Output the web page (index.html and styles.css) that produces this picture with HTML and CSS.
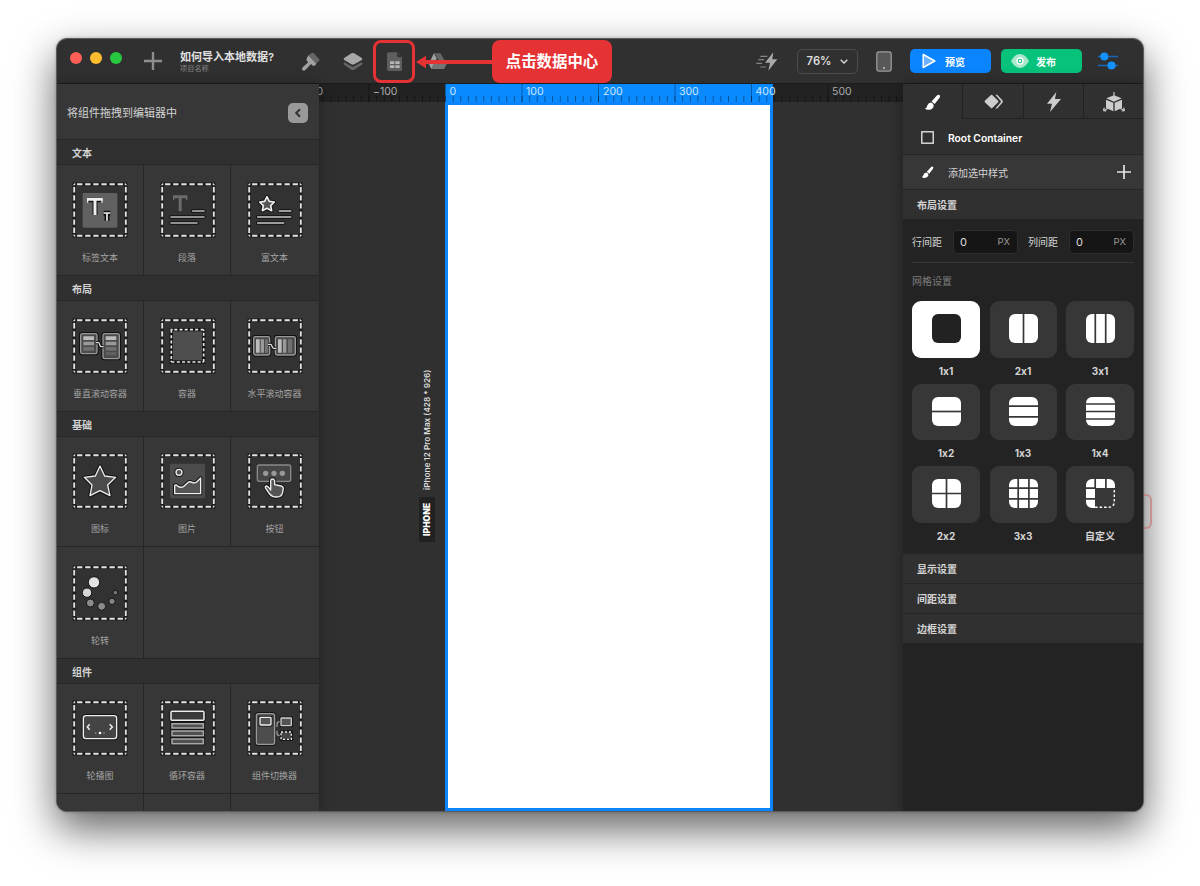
FILE: index.html
```html
<!DOCTYPE html>
<html lang="zh-CN">
<head>
<meta charset="utf-8">
<title>如何导入本地数据?</title>
<link rel="stylesheet" href="styles.css">
</head>
<body>
<svg class="defs" width="0" height="0" aria-hidden="true">
  <symbol id="box" viewBox="0 0 168 168">
    <rect x="6.6" y="6.6" width="154.8" height="154.8" fill="#323232" stroke="#1c1c1c" stroke-width="10"/>
    <rect x="6.6" y="6.6" width="154.8" height="154.8" fill="none" stroke="#e2e2e2" stroke-width="5.6" stroke-dasharray="3 5.7 15.9 8.4 15.9 8.4 15.9 8.4 15.9 8.4 15.9 8.4 15.9 5.7 3 0"/>
  </symbol>
  <symbol id="brush" viewBox="0 0 54 54">
    <path d="M49 3q4 3 1 8L34 32l-10-8L41 5q4-4 8-2z"/>
    <path d="M22 27q9 3 9 11-3 11-15 12Q7 51 3 45q6 0 7-8 3-9 12-10z"/>
  </symbol>
</svg>
<div class="window">
  <header class="topbar">
    <div class="lights"><i class="red"></i><i class="yellow"></i><i class="green"></i></div>
    <svg class="plus" viewBox="0 0 18 18"><path d="M9 0v18M0 9h18" stroke="#8e8e8e" stroke-width="2.4"/></svg>
    <div class="title"><b>如何导入本地数据?</b><span>项目名称</span></div>
    <nav class="tools">
      <svg viewBox="24 57 72 72"><path d="M56 76l9-7q3-2 6 0l16 18q3 3 0 6l-10 10z" fill="#666"/><path d="M55 76l24 26-4 4q-4 4-8 0l-4-4-17 18q-4 4-8 1t0-9l17-15-4-4q-4-5 0-9z" fill="#a2a2a2"/></svg>
      <svg viewBox="151.5 57 72 72"><path d="M161 97l26 14 26-14 3 3q0 3-3 5l-22 14q-4 2-8 0l-21-14q-3-2-3-5z" fill="#666"/><path d="M161 84l22-14q4-2 8 0l23 14q3 3 0 6l-23 13q-4 2-8 0l-22-13q-3-3 0-6z" fill="#a8a8a8"/></svg>
      <span class="picked"><svg viewBox="279 57 72 72"><path d="M296 67h26l14 14v38q0 4-4 4h-36q-5 0-5-5V72q0-5 5-5z" fill="#5e5e5e"/><path d="M321 67l15 15h-11q-4 0-4-4z" fill="#333"/><path d="M300 94h13v8h-13zM316 94h13v8h-13zM300 106h13v8h-13zM316 106h13v8h-13z" fill="#b4b4b4"/></svg></span>
      <svg viewBox="406.5 57 72 72"><path d="M430 70h20l18 31h-18l-14-25z" fill="#666"/><path d="M430 70l9 15-16 32-8-15z" fill="#a0a0a0"/><path d="M430 102h38l-7 15h-38z" fill="#747474"/></svg>
    </nav>
    <div class="actions">
      <svg class="i24" viewBox="45 57 72 72"><path d="M100 67L75 98h15l-5 24 27-34H97z" fill="#a8a8a8"/><path d="M61 79h21M55 89h17M49 100h17M61 111h17" stroke="#858585" stroke-width="3.5"/></svg>
      <div class="zoom">76%<svg viewBox="0 0 8 5"><path d="M.7.7L4 4 7.3.7" fill="none" stroke="#ddd" stroke-width="1.3"/></svg></div>
      <svg class="tablet" viewBox="0 0 16 21"><rect x=".8" y=".8" width="14.4" height="19.4" rx="2.4" fill="#585858" stroke="#9b9b9b" stroke-width="1.3"/><circle cx="8" cy="17" r="1" fill="#ccc"/></svg>
      <div class="btn blue"><svg viewBox="0 0 14 16"><path d="M1.2 1.5v13L12.8 8z" fill="#6cb3ff" stroke="#fff" stroke-width="1.5" stroke-linejoin="round"/></svg>预览</div>
      <div class="btn grn"><svg viewBox="0 0 18 14"><path d="M0 7Q4 0 9 0t9 7q-4 7-9 7T0 7z" fill="#a9e6cc"/><circle cx="9" cy="7" r="3" fill="#0abf78" stroke="#fff" stroke-width="1.4"/><circle cx="9" cy="7" r="1.3" fill="#fff"/></svg>发布</div>
      <svg class="sliders" viewBox="0 0 20 18"><path d="M0 4.5h20M0 13.5h20" stroke="#1768b6" stroke-width="1.4"/><circle cx="6.3" cy="4.5" r="4" fill="#1391ff"/><circle cx="13.5" cy="13.5" r="4" fill="#1391ff"/></svg>
    </div>
  </header>
  <main class="work">
    <aside class="left">
      <div class="hint">将组件拖拽到编辑器中<span class="fold"><svg viewBox="0 0 8 10"><path d="M6 1.2L2.2 5 6 8.8" fill="none" stroke="#333" stroke-width="2"/></svg></span></div>
      <h3>文本</h3>
      <div class="row">
        <div class="cell"><svg viewBox="66 126 168 168"><use href="#box" x="66" y="126" width="168" height="168"/><rect x="98" y="159" width="104" height="104" rx="4" fill="#616161"/><path d="M112 179h45M135 178v47M161 220h20M171 219v23" stroke="#111" stroke-width="15"/><path d="M111 178h47M135 178v47" stroke="#eee" stroke-width="9"/><path d="M113 176v12M156 176v12" stroke="#eee" stroke-width="4"/><path d="M161 219h20M171 219v23" stroke="#eee" stroke-width="5"/></svg><span>标签文本</span></div>
        <div class="cell"><svg viewBox="330 126 168 168"><use href="#box" x="330" y="126" width="168" height="168"/><path d="M369 170h43M390.500 170v44" stroke="#6b6b6b" stroke-width="9"/><path d="M371 169v11M410 169v11" stroke="#6b6b6b" stroke-width="4"/><path d="M428 213h34M363 231h99M363 249h78" stroke="#111" stroke-width="11" stroke-linecap="round"/><path d="M428 213h34M363 231h99M363 249h78" stroke="#bbb" stroke-width="5" stroke-linecap="round"/></svg><span>段落</span></div>
        <div class="cell"><svg viewBox="591 126 168 168"><use href="#box" x="591" y="126" width="168" height="168"/><path d="M651 170l7 14 15 2-11 11 3 15-14-7-14 7 3-15-11-11 15-2z" fill="#555" stroke="#111" stroke-width="11" stroke-linejoin="round"/><path d="M651 170l7 14 15 2-11 11 3 15-14-7-14 7 3-15-11-11 15-2z" fill="#555" stroke="#eee" stroke-width="5" stroke-linejoin="round"/><path d="M688 213h34M623 231h99M623 249h78" stroke="#111" stroke-width="11" stroke-linecap="round"/><path d="M688 213h34M623 231h99M623 249h78" stroke="#ccc" stroke-width="5" stroke-linecap="round"/></svg><span>富文本</span></div>
      </div>
      <h3>布局</h3>
      <div class="row">
        <div class="cell"><svg viewBox="66 84 168 168"><use href="#box" x="66" y="84" width="168" height="168"/><g fill="#4b4b4b"><rect x="92" y="131" width="49" height="60" rx="5" stroke="#111" stroke-width="10"/><rect x="159" y="131" width="49" height="75" rx="5" stroke="#111" stroke-width="10"/><rect x="92" y="131" width="49" height="60" rx="5" stroke="#999" stroke-width="4"/><rect x="159" y="131" width="49" height="75" rx="5" stroke="#999" stroke-width="4"/></g><path d="M100 139h32v11h-32zM167 139h32v11h-32z" fill="#bbb"/><path d="M100 155h32v11h-32zM167 155h32v11h-32z" fill="#999"/><path d="M100 171h32v11h-32zM167 171h32v11h-32z" fill="#707070"/><path d="M167 186h32v10h-32z" fill="#606060"/><path d="M138 158h8q2 0 3 6t5 6h7" fill="none" stroke="#111" stroke-width="9"/><path d="M138 158h8q2 0 3 6t5 6h7" fill="none" stroke="#ddd" stroke-width="4"/></svg><span>垂直滚动容器</span></div>
        <div class="cell"><svg viewBox="330 84 168 168"><use href="#box" x="330" y="84" width="168" height="168"/><rect x="364" y="119" width="97" height="97" fill="#4e4e4e" stroke="#161616" stroke-width="10"/><rect x="364" y="119" width="97" height="97" fill="none" stroke="#e6e6e6" stroke-width="5" stroke-dasharray="4 5 9 6.600 9 6.600 9 6.600 9 6.600 9 7.600 9 0"/></svg><span>容器</span></div>
        <div class="cell"><svg viewBox="591 84 168 168"><use href="#box" x="591" y="84" width="168" height="168"/><g fill="#4b4b4b"><rect x="611" y="140" width="48" height="55" rx="5" stroke="#111" stroke-width="10"/><rect x="676" y="140" width="60" height="55" rx="5" stroke="#111" stroke-width="10"/><rect x="611" y="140" width="48" height="55" rx="5" stroke="#999" stroke-width="4"/><rect x="676" y="140" width="60" height="55" rx="5" stroke="#999" stroke-width="4"/></g><path d="M618 148h11v40h-11zM684 148h11v40h-11z" fill="#bbb"/><path d="M632 148h10v40h-10zM699 148h10v40h-10z" fill="#999"/><path d="M645 148h9v40h-9zM714 148h12v40h-12z" fill="#707070"/><path d="M654 163h8q2 0 4 6t5 6h8" fill="none" stroke="#111" stroke-width="9"/><path d="M654 163h8q2 0 4 6t5 6h8" fill="none" stroke="#ddd" stroke-width="4"/></svg><span>水平滚动容器</span></div>
      </div>
      <h3>基础</h3>
      <div class="row short">
        <div class="cell"><svg viewBox="66 39 168 168"><use href="#box" x="66" y="39" width="168" height="168"/><path d="M150 78l14 30 33 4-24 23 7 32-30-15-30 15 6-32-23-23 33-4z" fill="#4b4b4b" stroke="#111" stroke-width="10" stroke-linejoin="round"/><path d="M150 78l14 30 33 4-24 23 7 32-30-15-30 15 6-32-23-23 33-4z" fill="#4b4b4b" stroke="#eee" stroke-width="4" stroke-linejoin="round"/></svg><span>图标</span></div>
        <div class="cell"><svg viewBox="330 39 168 168"><use href="#box" x="330" y="39" width="168" height="168"/><rect x="360" y="71" width="105" height="104" rx="5" fill="#4c4c4c"/><g fill="#555" stroke-linejoin="round"><g stroke="#111" stroke-width="10"><circle cx="387" cy="97" r="9"/><path d="M374 161v-25q3-4 10 3 8 5 16 1l13-12q6-5 13-1t14-1l12-12v47z"/></g><g stroke="#eee" stroke-width="4"><circle cx="387" cy="97" r="9"/><path d="M374 161v-25q3-4 10 3 8 5 16 1l13-12q6-5 13-1t14-1l12-12v47z"/></g></g></svg><span>图片</span></div>
        <div class="cell"><svg viewBox="591 39 168 168"><use href="#box" x="591" y="39" width="168" height="168"/><rect x="622" y="75" width="100" height="49" rx="6" fill="#464646" stroke="#8a8a8a" stroke-width="4"/><g fill="#999"><circle cx="647" cy="100" r="8"/><circle cx="672" cy="100" r="8"/><circle cx="697" cy="100" r="8"/></g><path d="M662 150v-28q0-5 5-5t7 5v12l20 4q6 2 6 7l-2 12q-3 14-17 14-14 1-22-9l-10-14q-6-8-1-10 5-1 14 12z" fill="#555" stroke="#111" stroke-width="10" stroke-linejoin="round"/><path d="M662 150v-28q0-5 5-5t7 5v12l20 4q6 2 6 7l-2 12q-3 14-17 14-14 1-22-9l-10-14q-6-8-1-10 5-1 14 12z" fill="#555" stroke="#eee" stroke-width="4" stroke-linejoin="round"/></svg><span>按钮</span></div>
      </div>
      <div class="row second">
        <div class="cell"><svg viewBox="66 375 168 168"><use href="#box" x="66" y="375" width="168" height="168"/><g stroke="#151515" stroke-width="3"><circle cx="132" cy="427" r="17" fill="#e2e2e2"/><circle cx="111" cy="458" r="14" fill="#d6d6d6"/><circle cx="121" cy="489" r="12" fill="#8c8c8c"/><circle cx="155" cy="499" r="12" fill="#8c8c8c"/><circle cx="186" cy="484" r="9.500" fill="#858585"/><circle cx="196" cy="458" r="7" fill="#777"/></g></svg><span>轮转</span></div>
      </div>
      <h3>组件</h3>
      <div class="row short">
        <div class="cell"><svg viewBox="66 134 168 168"><use href="#box" x="66" y="134" width="168" height="168"/><rect x="100" y="181" width="100" height="69" rx="8" fill="#444" stroke="#111" stroke-width="10"/><rect x="100" y="181" width="100" height="69" rx="8" fill="#444" stroke="#eee" stroke-width="4"/><path d="M119 207l-7 8 7 8M179 207l8 8-8 8" fill="none" stroke="#eee" stroke-width="4.500"/><g fill="#999"><circle cx="137" cy="233" r="2.500"/><circle cx="150" cy="233" r="4" fill="#fff"/><circle cx="162" cy="233" r="2.500"/></g></svg><span>轮播图</span></div>
        <div class="cell"><svg viewBox="330 134 168 168"><use href="#box" x="330" y="134" width="168" height="168"/><g fill="#505050"><g stroke="#151515" stroke-width="10"><rect x="363" y="168" width="99" height="27" rx="3"/><path d="M366 205h94v13h-94zM366 227h94v14h-94zM366 251h94v14h-94z"/></g><rect x="363" y="168" width="99" height="27" rx="3" stroke="#eee" stroke-width="4.500" fill="#3a3a3a"/><path d="M366 205h94v13h-94zM366 227h94v14h-94zM366 251h94v14h-94z" stroke="#a8a8a8" stroke-width="4.500"/></g></svg><span>循环容器</span></div>
        <div class="cell"><svg viewBox="591 134 168 168"><use href="#box" x="591" y="134" width="168" height="168"/><rect x="619" y="175" width="55" height="92" rx="6" fill="#4d4d4d" stroke="#151515" stroke-width="10"/><rect x="619" y="175" width="55" height="92" rx="6" fill="#4d4d4d" stroke="#999" stroke-width="4"/><g stroke="#151515" stroke-width="9" fill="#555"><rect x="630" y="186" width="33" height="23"/><rect x="693" y="188" width="31" height="23"/><rect x="693" y="230" width="31" height="22"/></g><rect x="630" y="186" width="33" height="23" rx="2" fill="#555" stroke="#eee" stroke-width="4"/><rect x="693" y="188" width="31" height="23" rx="2" fill="#555" stroke="#ccc" stroke-width="4"/><rect x="693" y="230" width="31" height="22" fill="#444" stroke="#eee" stroke-width="4" stroke-dasharray="6 6"/><path d="M681 215v-8q0-8 8-8M681 226v7q0 8 8 8" stroke="#999" stroke-width="4" fill="none"/></svg><span>组件切换器</span></div>
      </div>
      <div class="row last"><div class="cell"><i></i></div><div class="cell"><i></i></div><div class="cell"><i></i></div></div>
    </aside>
    <section class="canvas">
      <svg class="ruler" viewBox="0 0 584 18">
        <defs>
          <pattern id="minor" x="126" width="7.650" height="18" patternUnits="userSpaceOnUse"><path d="M.5 12v6" stroke="#000" stroke-opacity=".48" stroke-width=".8"/></pattern>
          <pattern id="major" x="126" width="76.500" height="18" patternUnits="userSpaceOnUse"><path d="M.5 0v18" stroke="#000" stroke-opacity=".42" stroke-width=".8"/></pattern>
        </defs>
        <rect width="584" height="18" fill="#222"/>
        <rect x="126" width="328" height="18" fill="#0a8aff"/>
        <rect width="584" height="18" fill="url(#minor)"/>
        <rect width="584" height="18" fill="url(#major)"/>
        <g class="nums"><text x="-22">−200</text><text x="54">−100</text><text x="130.500" class="on">0</text><text x="207" class="on">100</text><text x="284" class="on">200</text><text x="360" class="on">300</text><text x="436.500" class="on">400</text><text x="513">500</text></g>
      </svg>
      <div class="artboard"></div>
      <div class="device"><b>IPHONE</b><span>iPhone 12 Pro Max (428 * 926)</span></div>
    </section>
    <aside class="right">
      <div class="tabs">
        <div class="active"><svg viewBox="0 0 54 54" fill="#fff"><use href="#brush"/></svg></div>
        <div><svg class="wide" viewBox="0 0 60 48"><path d="M22 3q2-2 4 0l18 18q3 3 0 6L26 45q-2 2-4 0L3 27q-3-3 0-6zM36 2h6l17 19q2 3 0 6L42 46h-6l17-20q2-2 0-4z" fill="#ccc"/></svg></div>
        <div><svg class="bolt" viewBox="0 0 42 60"><path d="M28 0L0 35h15L9 60l33-39H24z" fill="#ccc"/></svg></div>
        <div><svg class="cube" viewBox="0 0 66 60"><path d="M33 10l23 9-23 10-23-10zM9 23l22 9v26L9 48zM57 23l-22 9v26l22-10z" fill="#ccc"/><path d="M33 0v16M1 56l14-7M65 56l-14-7M1 56l3-9M1 56l9 1M65 56l-3-9M65 56l-9 1" stroke="#ccc" stroke-width="3.500"/></svg></div>
      </div>
      <div class="line root"><svg viewBox="0 0 13 13"><rect x=".8" y=".8" width="11.4" height="11.4" fill="none" stroke="#eee" stroke-width="1.3"/></svg><b>Root Container</b></div>
      <div class="line add"><svg viewBox="0 0 54 54" fill="#fff"><use href="#brush"/></svg><span>添加选中样式</span><svg class="more" viewBox="0 0 14 14"><path d="M7 0v14M0 7h14" stroke="#e4e4e4" stroke-width="1.7"/></svg></div>
      <h4 class="first">布局设置</h4>
      <div class="settings">
        <div class="gaps"><span>行间距</span><div class="field">0<em>PX</em></div><span>列间距</span><div class="field">0<em>PX</em></div></div>
        <div class="caption">网格设置</div>
        <div class="tiles">
          <figure class="sel"><div><svg viewBox="0 0 29 29"><rect width="29" height="29" rx="6" fill="#222"/></svg></div>1x1</figure>
          <figure><div><svg viewBox="0 0 29 29"><rect width="29" height="29" rx="6"/><path d="M14.500 0v29"/></svg></div>2x1</figure>
          <figure><div><svg viewBox="0 0 29 29"><rect width="29" height="29" rx="6"/><path d="M9.300 0v29M19.700 0v29"/></svg></div>3x1</figure>
          <figure><div><svg viewBox="0 0 29 29"><rect width="29" height="29" rx="6"/><path d="M0 14.500h29"/></svg></div>1x2</figure>
          <figure><div><svg viewBox="0 0 29 29"><rect width="29" height="29" rx="6"/><path d="M0 9.200h29M0 19.900h29"/></svg></div>1x3</figure>
          <figure><div><svg viewBox="0 0 29 29"><rect width="29" height="29" rx="6"/><path d="M0 7h29M0 14.500h29M0 22h29"/></svg></div>1x4</figure>
          <figure><div><svg viewBox="0 0 29 29"><rect width="29" height="29" rx="6"/><path d="M0 14.500h29M14.500 0v29"/></svg></div>2x2</figure>
          <figure><div><svg viewBox="0 0 29 29"><rect width="29" height="29" rx="6"/><path d="M0 9.200h29M0 19.900h29M9.200 0v29M19.900 0v29"/></svg></div>3x3</figure>
          <figure><div><svg viewBox="0 0 29 29"><path class="solid" d="M6 0h17a6 6 0 0 1 6 6v3H9v20H6a6 6 0 0 1-6-6V6a6 6 0 0 1 6-6z"/><path d="M9.200 0v9.200M19.900 0v9.200M0 9.200h9.200M0 19.900h9.200"/><path class="dots" d="M28.300 11v12a5.300 5.300 0 0 1-5.300 5.300H9"/></svg></div>自定义</figure>
        </div>
      </div>
      <h4>显示设置</h4>
      <h4>间距设置</h4>
      <h4>边框设置</h4>
    </aside>
  </main>
</div>
<div class="callout-frame"></div>
<svg class="callout-arrow" viewBox="0 0 78 14"><path d="M0 7L10 .8v4.300h68v3.800H10v4.300z" fill="#e53234"/></svg>
<div class="callout">点击数据中心</div>
<div class="stub"></div>
</body>
</html>
```

FILE: styles.css
```css
* { box-sizing: border-box; }
body {
  margin: 0;
  height: 886px;
  overflow: hidden;
  position: relative;
  background: #fff;
  padding: 38px 56px 0;
  font-family: Inter, "Noto Sans CJK SC", sans-serif;
  font-feature-settings: "calt" 0;
  color: #d4d4d4;
}
svg { display: block; flex: none; }
.defs { position: absolute; }
.window {
  position: relative;
  z-index: 1;
  width: 1088px;
  height: 774px;
  border: 1px solid #5c5c5c;
  border-radius: 11px;
  overflow: hidden;
  background: #303030;
  box-shadow: 0 17px 42px rgba(0, 0, 0, .62), 0 0 3px rgba(0, 0, 0, .25);
  display: flex;
  flex-direction: column;
}

/* top bar */
.topbar {
  height: 45px;
  border-bottom: 1px solid #1d1d1d;
  display: flex;
  align-items: center;
  padding-left: 13px;
}
.lights { display: flex; gap: 8px; margin-bottom: 6px; }
.lights i { width: 12px; height: 12px; border-radius: 50%; }
.red { background: #ff5f57; }
.yellow { background: #febc2e; }
.green { background: #28c840; }
.plus { width: 18px; height: 18px; margin-left: 22px; }
.title { width: 118px; margin-left: 18px; display: flex; flex-direction: column; white-space: nowrap; }
.title b { font-size: 11px; line-height: 14px; font-weight: 600; color: #e0e0e0; }
.title span { font-size: 7.200px; line-height: 9px; color: #858585; }
.tools { display: flex; gap: 18.500px; }
.tools svg, .i24 { width: 24px; height: 24px; }
.actions { display: flex; align-items: center; margin-left: auto; padding-right: 25px; }
.zoom {
  width: 61px; height: 25px; margin-left: 18px;
  border: 1px solid #4b4b4b; border-radius: 5px;
  display: flex; align-items: center; justify-content: center; gap: 9px;
  font-size: 11.300px; font-weight: 600; color: #ddd;
}
.zoom svg { width: 8px; height: 5px; }
.tablet { width: 16px; height: 21px; margin: 0 18px; }
.btn {
  width: 81px; height: 24px; border-radius: 5px; margin-right: 10px; padding-left: 12px;
  display: flex; align-items: center; gap: 9px;
  color: #fff; font-size: 10px; font-weight: 700;
}
.btn svg { width: 14px; height: 16px; }
.grn { margin-right: 16px; padding-left: 10px; gap: 7px; }
.btn.grn svg { width: 18px; height: 14px; }
.blue { background: #0a84ff; }
.grn { background: #07c27a; }
.sliders { width: 20px; height: 18px; }

.work { flex: 1; display: flex; min-height: 0; }

/* component panel */
.left { width: 262px; background: #373737; flex: none; overflow: hidden; box-shadow: 0 0 12px rgba(0, 0, 0, .35); z-index: 2; }
.hint { height: 55px; padding: 0 11px 0 10px; display: flex; align-items: center; justify-content: space-between; font-size: 11px; }
.fold { width: 20px; height: 20px; border-radius: 5px; background: #999; display: flex; align-items: center; justify-content: center; margin-top: 3px; }
.fold svg { width: 8px; height: 10px; }
.left h3 {
  margin: 0; height: 25px; border-top: 1px solid #262626; background: #303030;
  padding-left: 15px; font-size: 10px; line-height: 26px; font-weight: 700;
}
.row { height: 111px; border-top: 1px solid #262626; display: grid; grid-template-columns: 87px 87px 88px; }
.short { height: 110px; }
.second { height: 112px; }
.cell { border-right: 1px solid #262626; display: flex; flex-direction: column; align-items: center; padding-top: 17px; }
.cell:nth-child(3) { border-right-color: #333; }
.cell svg { width: 56px; height: 56px; }
.cell:nth-child(2) svg { margin-left: 1px; }
.short .cell { padding-top: 16px; }
.second .cell { padding-top: 18px; }
.cell span { margin-top: 13px; font-size: 9px; line-height: 14px; color: #a3a3a3; }
.last { height: 18px; }
.last i { width: 56px; height: 1px; background: #151515; }

/* editor canvas */
.canvas { position: relative; flex: 1; background: #303030; overflow: hidden; }
.ruler { width: 584px; height: 18px; }
.nums { font-size: 10.500px; fill: #aaa; }
.nums text { transform: translateY(11px); }
.nums .on { fill: #cfe5ff; }
.artboard { position: absolute; left: 126px; top: 18px; width: 328px; height: 709px; background: #fff; border: 3px solid #0a84ff; }
.device {
  position: absolute; left: 100px; top: 285px; height: 173px; width: 16px;
  writing-mode: vertical-rl; transform: rotate(180deg);
  display: flex; align-items: center; gap: 7px; white-space: nowrap;
  font-size: 8.200px; font-weight: 600; color: #ddd;
}
.device b { flex: none; background: #212121; color: #fff; height: 45px; width: 16px; display: flex; align-items: center; justify-content: center; font-size: 8.600px; }

/* properties panel */
.right { width: 240px; flex: none; background: #232323; z-index: 2; box-shadow: 0 0 14px rgba(0, 0, 0, .35); }
.tabs { height: 35px; display: grid; grid-template-columns: 59px 61px 60px 1fr; background: #303030; }
.tabs div { display: flex; align-items: center; justify-content: center; border-left: 1px solid #222; border-bottom: 1px solid #222; padding-top: 1px; }
.tabs .active { border: 0; padding-top: 2px; }
.tabs svg { width: 17px; height: 17px; }
.tabs .wide { width: 19px; height: 15px; }
.tabs .bolt { width: 14px; height: 20px; }
.tabs .cube { width: 22px; height: 20px; }
.line { height: 35px; display: flex; align-items: center; gap: 14px; padding-left: 18px; background: #303030; font-size: 10px; }
.line svg { width: 13px; height: 13px; }
.line b { color: #fff; font-size: 10.300px; font-weight: 600; }
.root { padding-top: 2px; }
.add { background: #373737; border-top: 1px solid #262626; }
.line .more { width: 14px; height: 14px; margin-left: auto; margin-right: 12px; }
.right h4 { margin: 0; height: 30px; border-top: 1px solid #262626; padding-left: 14px; font-size: 10px; line-height: 31px; font-weight: 600; background: #303030; }
.settings { height: 334px; padding: 11px 9px 0 9px; }
.gaps { height: 33px; display: flex; align-items: flex-start; border-bottom: 1px solid #383838; font-size: 10px; line-height: 24px; }
.gaps span { width: 41px; }
.gaps .field + span { margin-left: 10px; }
.field {
  width: 65px; height: 24px; background: #151515; border: 1px solid #2d2d2d; border-radius: 5px;
  display: flex; justify-content: space-between; padding: 0 7px 0 6px; line-height: 22px; font-size: 11px; color: #ddd;
}
.field em { font-style: normal; font-size: 9.500px; color: #999; }
.caption { height: 38px; line-height: 37px; font-size: 10px; color: #7d7d7d; }
.tiles { display: grid; grid-template-columns: 68px 67px 68px; column-gap: 9.500px; grid-auto-rows: 82.500px; }
.tiles figure { margin: 0; text-align: center; font-size: 10px; line-height: 27px; font-weight: 700; }
.tiles div { height: 56.500px; border-radius: 9px; background: #373737; display: flex; align-items: center; justify-content: center; }
.tiles .sel div { background: #fff; }
.tiles svg { width: 29px; height: 29px; fill: #fff; margin-bottom: 1px; }
.tiles path { stroke: #373737; stroke-width: 1.700; fill: none; }
.tiles .solid { fill: #fff; stroke: none; }
.tiles .dots { stroke: #fff; stroke-width: 1.400; stroke-dasharray: 2.500 2; }

/* annotation over the toolbar */
.callout-frame { position: absolute; z-index: 3; left: 373px; top: 40px; width: 42px; height: 43px; border: 3px solid #e53234; border-radius: 8px; }
.callout-arrow { position: absolute; z-index: 3; left: 416px; top: 55px; width: 78px; height: 14px; }
.callout {
  position: absolute; z-index: 3; left: 492px; top: 40px; width: 120px; height: 43px; border-radius: 8px;
  background: #e53234; color: #fff; text-align: center; font-size: 15.400px; line-height: 44px; font-weight: 700;
}
.stub { position: absolute; z-index: 3; left: 1144px; top: 494px; width: 8px; height: 35px; border: 2px solid rgba(200, 110, 110, .6); border-left: 0; border-radius: 0 6px 6px 0; }
```
